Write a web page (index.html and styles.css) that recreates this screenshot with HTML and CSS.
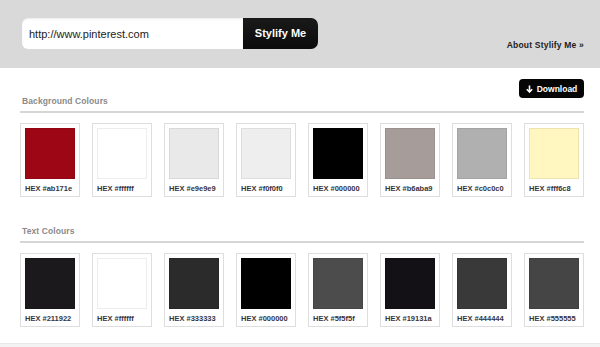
FILE: index.html
```html
<!DOCTYPE html>
<html>
<head>
  <title>Stylify Me</title>
  <meta charset="utf-8">
  <link rel="stylesheet" href="styles.css">
</head>
<body>

  <!-- Search bar -->
  <div class="top-bar">
    <form class="search">
      <input class="search-input" type="text" value="http://www.pinterest.com">
      <button class="search-btn" type="button">Stylify Me</button>
    </form>
    <a class="about-link" href="#">About Stylify Me &raquo;</a>
  </div>

  <div class="main">

    <div class="section">
      <div class="section-head">
        <h2>Background Colours</h2>
        <button class="download-btn" type="button">
          <svg class="arrow" width="7" height="8" viewBox="0 0 7 8"><path d="M3.5 0.5V7M0.8 4.3L3.5 7L6.2 4.3" fill="none" stroke="#fff" stroke-width="1.6"/></svg>
          Download
        </button>
      </div>
      <ul class="swatch-list">
        <li class="swatch"><div class="chip" style="background:#9c0615"></div><span>HEX #ab171e</span></li>
        <li class="swatch"><div class="chip" style="background:#ffffff"></div><span>HEX #ffffff</span></li>
        <li class="swatch"><div class="chip" style="background:#e9e9e9"></div><span>HEX #e9e9e9</span></li>
        <li class="swatch"><div class="chip" style="background:#eeeeef"></div><span>HEX #f0f0f0</span></li>
        <li class="swatch"><div class="chip" style="background:#000000"></div><span>HEX #000000</span></li>
        <li class="swatch"><div class="chip" style="background:#a69c99"></div><span>HEX #b6aba9</span></li>
        <li class="swatch"><div class="chip" style="background:#b0b0b0"></div><span>HEX #c0c0c0</span></li>
        <li class="swatch"><div class="chip" style="background:#fff6c0"></div><span>HEX #fff6c8</span></li>
      </ul>
    </div>

    <div class="section">
      <div class="section-head">
        <h2>Text Colours</h2>
      </div>
      <ul class="swatch-list">
        <li class="swatch"><div class="chip" style="background:#1b191c"></div><span>HEX #211922</span></li>
        <li class="swatch"><div class="chip" style="background:#ffffff"></div><span>HEX #ffffff</span></li>
        <li class="swatch"><div class="chip" style="background:#2b2b2b"></div><span>HEX #333333</span></li>
        <li class="swatch"><div class="chip" style="background:#000000"></div><span>HEX #000000</span></li>
        <li class="swatch"><div class="chip" style="background:#4c4c4c"></div><span>HEX #5f5f5f</span></li>
        <li class="swatch"><div class="chip" style="background:#141116"></div><span>HEX #19131a</span></li>
        <li class="swatch"><div class="chip" style="background:#393939"></div><span>HEX #444444</span></li>
        <li class="swatch"><div class="chip" style="background:#454545"></div><span>HEX #555555</span></li>
      </ul>
    </div>

  </div>

  <div class="footer"></div>

</body>
</html>
```

FILE: styles.css
```css
/* General Page Styling */
body {
  font-family: "Liberation Sans", Arial, sans-serif;
  background-color: #fff;
  margin: 0;
  color: #222;
}

/* Top Bar */
.top-bar {
  background-color: #d9d9d9;
  height: 68px;
  box-sizing: border-box;
  padding: 18px 16px 0 22px;
  display: flex;
  justify-content: space-between;
  align-items: flex-start;
}

.search {
  display: flex;
  margin: 0;
}

.search-input {
  width: 221px;
  height: 31px;
  box-sizing: border-box;
  border: none;
  border-radius: 6px 0 0 6px;
  padding: 0 7px;
  font-family: inherit;
  font-size: 11px;
  color: #222;
  background: #fff;
  box-shadow: inset 0 1px 2px rgba(0, 0, 0, 0.08);
  outline: none;
}

.search-btn {
  width: 75px;
  height: 31px;
  border: none;
  border-radius: 0 7px 7px 0;
  background: linear-gradient(#1a1a1a, #0b0b0b);
  color: #fff;
  font-family: inherit;
  font-weight: bold;
  font-size: 11px;
  padding: 0 0 2px;
  cursor: pointer;
}

.about-link {
  margin-top: 22px;
  color: #222;
  font-size: 8.5px;
  font-weight: bold;
  letter-spacing: 0.2px;
  text-decoration: none;
}

/* Main Area */
.main {
  padding: 11px 16px 0 20px;
}

.section + .section {
  margin-top: 12px;
}

.section-head {
  display: flex;
  justify-content: space-between;
  align-items: flex-start;
  padding-bottom: 4px;
  border-bottom: 2px solid #d6d6d6;
}

h2 {
  margin: 16px 0 0 2px;
  font-size: 8.5px;
  line-height: 12px;
  color: #8a8a8a;
  letter-spacing: 0.1px;
}

.download-btn {
  height: 19px;
  width: 65px;
  border: none;
  border-radius: 4px;
  background: #050505;
  color: #fff;
  font-family: inherit;
  font-weight: bold;
  font-size: 8.5px;
  padding: 0;
  display: flex;
  align-items: center;
  justify-content: center;
  gap: 4px;
  cursor: pointer;
}

/* Swatches */
.swatch-list {
  list-style-type: none;
  margin: 10px 0 0;
  padding: 0;
  display: grid;
  grid-template-columns: repeat(8, 60px);
  column-gap: 12px;
}

.swatch {
  border: 1px solid #dedede;
  padding: 4px 4px 2px;
  height: 74px;
  box-sizing: border-box;
}

.chip {
  height: 51px;
  box-sizing: border-box;
  border: 1px solid rgba(0, 0, 0, 0.07);
}

.swatch span {
  display: block;
  margin-top: 4px;
  font-size: 7.5px;
  line-height: 11px;
  font-weight: bold;
  color: #363340;
  white-space: nowrap;
}

/* Footer strip */
.footer {
  margin-top: 16px;
  height: 10px;
  background: #f3f3f3;
  border-top: 1px solid #e8e8e8;
}
```
